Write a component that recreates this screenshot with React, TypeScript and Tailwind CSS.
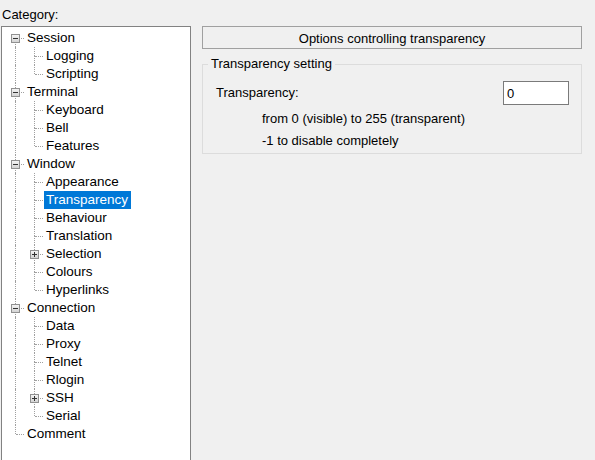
import React from "react";

type Node = { label: string; children?: Node[]; collapsed?: boolean };

const tree: Node[] = [
  { label: "Session", children: [{ label: "Logging" }, { label: "Scripting" }] },
  { label: "Terminal", children: [{ label: "Keyboard" }, { label: "Bell" }, { label: "Features" }] },
  {
    label: "Window",
    children: [
      { label: "Appearance" },
      { label: "Transparency" },
      { label: "Behaviour" },
      { label: "Translation" },
      { label: "Selection", collapsed: true, children: [] },
      { label: "Colours" },
      { label: "Hyperlinks" },
    ],
  },
  {
    label: "Connection",
    children: [
      { label: "Data" },
      { label: "Proxy" },
      { label: "Telnet" },
      { label: "Rlogin" },
      { label: "SSH", collapsed: true, children: [] },
      { label: "Serial" },
    ],
  },
  { label: "Comment" },
];

type Row = {
  label: string;
  ancestors: boolean[];
  first: boolean;
  last: boolean;
  box: null | "plus" | "minus";
};

function flatten(nodes: Node[], ancestors: boolean[], isRoot: boolean, out: Row[]) {
  nodes.forEach((n, i) => {
    const last = i === nodes.length - 1;
    const hasKids = n.children !== undefined;
    out.push({
      label: n.label,
      ancestors,
      first: isRoot && i === 0,
      last,
      box: hasKids ? (n.collapsed ? "plus" : "minus") : null,
    });
    if (hasKids && !n.collapsed && n.children) {
      flatten(n.children, [...ancestors, !last], false, out);
    }
  });
  return out;
}

const rows = flatten(tree, [], true, []);

function TreeRow({ row }: { row: Row }) {
  const selected = row.label === "Transparency";
  return (
    <div className="flex h-[18px] items-center">
      {row.ancestors.map((cont, i) => (
        <div key={i} className="relative h-[18px] w-[19px] shrink-0">
          {cont && (
            <div className="absolute left-[10px] top-0 bottom-0 border-l border-dotted border-[#a0a0a0]" />
          )}
        </div>
      ))}
      <div className="relative h-[18px] w-[19px] shrink-0">
        {!row.first && (
          <div className="absolute left-[10px] top-0 h-[9px] border-l border-dotted border-[#a0a0a0]" />
        )}
        {!row.last && (
          <div className="absolute left-[10px] top-[9px] bottom-0 border-l border-dotted border-[#a0a0a0]" />
        )}
        <div className="absolute left-[11px] top-[9px] w-[8px] border-t border-dotted border-[#a0a0a0]" />
        {row.box && (
          <div className="absolute left-[6px] top-[5px] flex h-[9px] w-[9px] items-center justify-center border border-[#919191] bg-gradient-to-b from-[#f4f4f4] to-[#d4d4d4]">
            <div className="relative h-[1px] w-[5px] bg-[#333]">
              {row.box === "plus" && (
                <div className="absolute left-[2px] top-[-2px] h-[5px] w-[1px] bg-[#333]" />
              )}
            </div>
          </div>
        )}
      </div>
      <span
        className={
          "ml-[1px] whitespace-nowrap pl-[2px] pr-[3px] text-[13.5px] leading-[18px] " +
          (selected ? "bg-[#0078d7] text-white" : "text-black")
        }
      >
        {row.label}
      </span>
    </div>
  );
}

export default function App() {
  return (
    <div
      className="flex h-[460px] w-[595px] overflow-hidden bg-[#f0f0f0] text-[13px] text-black"
      style={{ fontFamily: '"Liberation Sans", Arial, sans-serif' }}
    >
      <div className="ml-[1px] flex w-[190px] shrink-0 flex-col">
        <div className="pl-[1px] pt-[6px] leading-[18px]">Category:</div>
        <div className="mt-[2px] h-[460px] shrink-0 border border-[#828282] bg-white pl-[3px] pt-[2px]">
          {rows.map((r, i) => (
            <TreeRow key={i} row={r} />
          ))}
        </div>
      </div>
      <div className="ml-[11px] flex w-[380px] shrink-0 flex-col pt-[26px]">
        <div className="flex h-[23px] items-center justify-center border border-[#a0a0a0] pt-[2px] leading-[18px]">
          Options controlling transparency
        </div>
        <fieldset className="mt-[7px] border border-[#dcdcdc] pb-[1px]">
          <legend className="ml-[5px] px-[3px] leading-[16px]">Transparency setting</legend>
          <div className="mt-[9px] flex items-center justify-between pl-[13px] pr-[12px]">
            <span className="leading-[18px]">Transparency:</span>
            <input
              readOnly
              value="0"
              className="h-[24px] w-[66px] border border-[#7a7a7a] bg-white pl-[3px] text-[13px] outline-none"
            />
          </div>
          <div className="mt-[3px] pl-[59px] leading-[22px]">from 0 (visible) to 255 (transparent)</div>
          <div className="pl-[59px] leading-[22px]">-1 to disable completely</div>
        </fieldset>
      </div>
    </div>
  );
}
